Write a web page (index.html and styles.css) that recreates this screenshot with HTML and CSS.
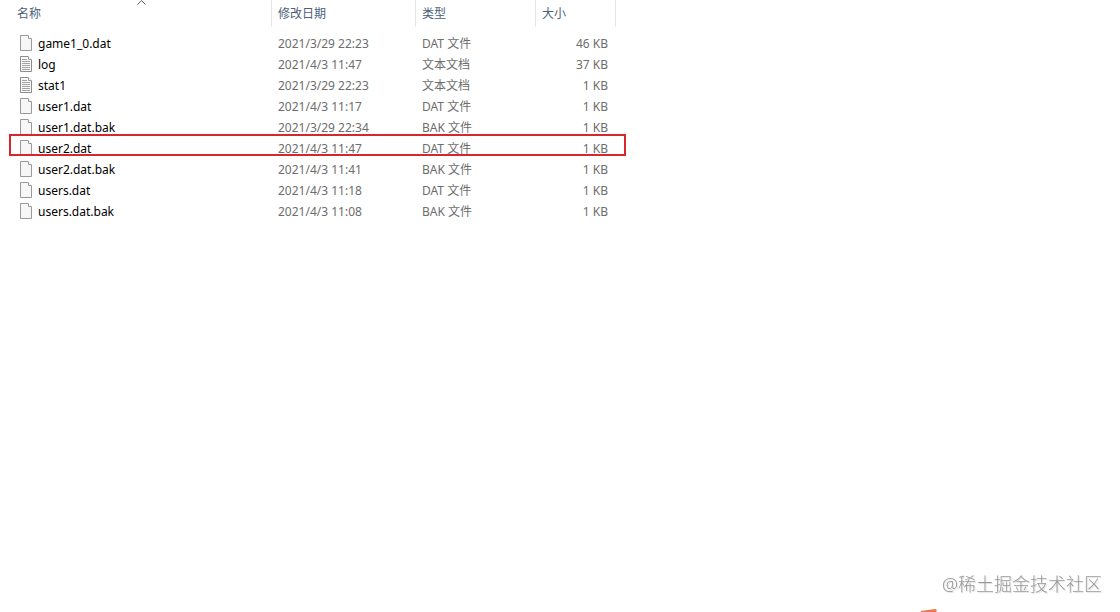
FILE: index.html
```html
<!DOCTYPE html>
<html lang="zh-CN">
<head>
  <meta charset="UTF-8" />
  <title>文件列表</title>
  <link rel="stylesheet" href="styles.css">
</head>
<body>

<!-- Icons -->
<svg class="defs">
  <symbol id="icon-file" viewBox="0 0 12 16">
    <path d="M.5 .5H8L11.5 4V15.5H.5Z" fill="#f7f7f7" stroke="#999" />
    <path d="M8.5 .5V3.5H11.5" fill="#fff" stroke="#999" />
  </symbol>
  <symbol id="icon-text" viewBox="0 0 12 16">
    <path d="M.5 .5H8L11.5 4V15.5H.5Z" fill="#f9f9f9" stroke="#8c8c8c" />
    <path d="M8.5 .5V3.5H11.5" fill="#fff" stroke="#999" />
    <path d="M2 3.5H7M2 5.5H10M2 7.5H10M2 9.5H10M2 11.5H10M2 13.5H10" stroke="#a3a3a3" />
  </symbol>
</svg>

<table class="files">
  <thead>
    <tr>
      <th class="col-name">
        <svg class="sort" viewBox="0 0 9 5"><path d="M.5 4.5L4.5 .5L8.5 4.5" fill="none" stroke="#5f5f5f" /></svg>
        名称
      </th>
      <th class="col-date">修改日期</th>
      <th class="col-type">类型</th>
      <th class="col-size">大小</th>
    </tr>
  </thead>
  <tbody id="fileBody"></tbody>
</table>

<div class="watermark">@稀土掘金技术社区</div>
<svg class="corner" viewBox="0 0 16 3"><path d="M0 2L14 0L16 1L15 3H0Z" fill="#ee7546" /></svg>

<script>
  const files = [
    { name: "game1_0.dat", date: "2021/3/29 22:23", type: "DAT 文件", size: "46 KB" },
    { name: "log", date: "2021/4/3 11:47", type: "文本文档", size: "37 KB" },
    { name: "stat1", date: "2021/3/29 22:23", type: "文本文档", size: "1 KB" },
    { name: "user1.dat", date: "2021/4/3 11:17", type: "DAT 文件", size: "1 KB" },
    { name: "user1.dat.bak", date: "2021/3/29 22:34", type: "BAK 文件", size: "1 KB" },
    { name: "user2.dat", date: "2021/4/3 11:47", type: "DAT 文件", size: "1 KB", marked: true },
    { name: "user2.dat.bak", date: "2021/4/3 11:41", type: "BAK 文件", size: "1 KB" },
    { name: "users.dat", date: "2021/4/3 11:18", type: "DAT 文件", size: "1 KB" },
    { name: "users.dat.bak", date: "2021/4/3 11:08", type: "BAK 文件", size: "1 KB" }
  ];

  const body = document.getElementById("fileBody");
  files.forEach(file => {
    const icon = file.type === "文本文档" ? "icon-text" : "icon-file";
    const row = document.createElement("tr");
    if (file.marked) row.className = "marked";
    row.innerHTML = `
      <td class="name"><div><svg class="icon"><use href="#${icon}"></use></svg>${file.name}</div></td>
      <td>${file.date}</td>
      <td>${file.type}</td>
      <td class="size">${file.size}</td>
    `;
    body.appendChild(row);
  });
</script>

</body>
</html>
```

FILE: styles.css
```css
body {
  margin: 0;
  min-height: 100vh;
  background: #fff;
  font-family: "Noto Sans", "Noto Sans CJK SC", sans-serif;
  font-size: 12px;
  line-height: 21px;
  color: #6d6d6d;
}
.defs { position: absolute; width: 0; height: 0; }

.files {
  table-layout: fixed;
  width: 606px;
  margin-left: 10px;
  border-collapse: separate;
  border-spacing: 0;
}
.files th {
  position: relative;
  height: 27px;
  box-sizing: border-box;
  padding: 0 6px;
  border-right: 1px solid #e5e5e5;
  font-weight: normal;
  text-align: left;
  color: #4c607a;
}
.files .col-name { width: 262px; padding-left: 7px; }
.files .col-date { width: 144px; }
.files .col-type { width: 120px; }
.files .col-size { width: 80px; }
.files thead::after { content: ""; display: block; height: 6px; }
.sort { position: absolute; top: 0; left: 127px; width: 9px; height: 5px; }

.files td { height: 21px; padding: 0 7px 0 6px; white-space: nowrap; }
.files .name { padding-left: 10px; color: #000; }
.name div { display: flex; align-items: flex-start; gap: 6px; height: 21px; }
.icon { width: 12px; height: 16px; margin-top: 2px; }
.files .size { text-align: right; padding-right: 8px; }

.marked { position: relative; }
.marked .name::after {
  content: "";
  position: absolute;
  top: -4px;
  left: -1px;
  right: -10px;
  bottom: 3px;
  border: 2px solid #d8262c;
}

.watermark {
  position: fixed;
  right: 18px;
  bottom: 16px;
  font-size: 18px;
  font-weight: 300;
  line-height: 24px;
  color: #999;
  text-shadow: 1px 1px 1px #ddd;
}
.corner { position: fixed; right: 183px; bottom: 0; width: 16px; height: 3px; }
```
